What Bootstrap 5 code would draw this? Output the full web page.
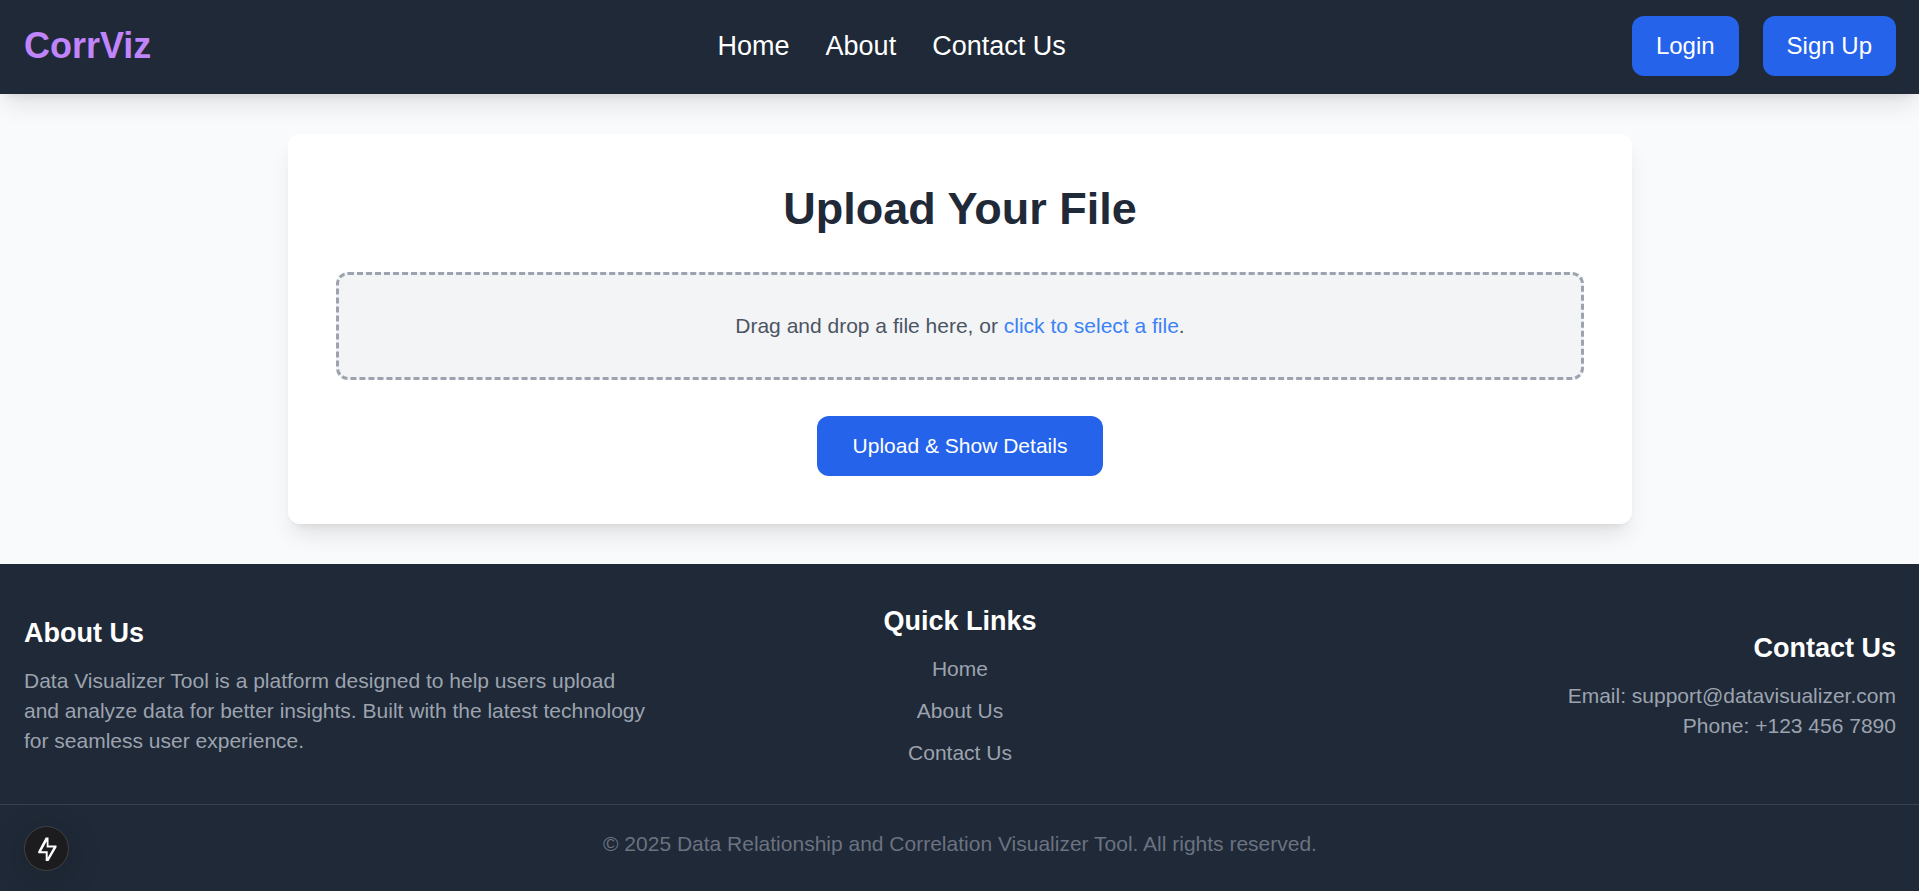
<!DOCTYPE html>
<html lang="en">
<head>
<meta charset="utf-8">
<meta name="viewport" content="width=device-width, initial-scale=1">
<title>CorrViz</title>
<link href="https://cdn.jsdelivr.net/npm/bootstrap@5.3.0/dist/css/bootstrap.min.css" rel="stylesheet">
<style>
  body { font-family: "Liberation Sans", Arial, sans-serif; font-size: 21px; line-height: 30px; background: #f9fafb; }
  a { text-decoration: none; }
  .bg-slate { background: #1f2937; }
  .soft-shadow { box-shadow: 0 15px 23px -5px rgba(0,0,0,.1), 0 6px 9px -6px rgba(0,0,0,.1); }
  .site-header { padding: 16px 23px 18px 24px; }
  .brand { font-size: 36px; line-height: 48px; color: #c084fc; }
  .site-nav { gap: 36px; font-size: 27px; line-height: 42px; }
  .btn-blue { --bs-btn-color: #fff; --bs-btn-bg: #2563eb; --bs-btn-hover-color: #fff; --bs-btn-hover-bg: #1d4ed8; --bs-btn-active-color: #fff; --bs-btn-active-bg: #1d4ed8;
    border: 0; border-radius: 12px; padding: 12px 24px; font-size: 24px; line-height: 36px; }
  .btn-upload { padding: 15px 36px; font-size: 21px; line-height: 30px; }
  .page-main { padding: 40px 23px 40px 24px; }
  .upload-card { max-width: 1344px; padding: 48px; border: 0; border-radius: 12px; }
  .upload-title { font-size: 45px; line-height: 54px; margin-bottom: 36px; color: #1f2937; }
  .drop-zone { border: 3px dashed #9ca3af; border-radius: 12px; background: #f3f4f6; color: #4b5563; padding: 36px; margin-bottom: 36px; }
  .drop-zone label { color: #3b82f6; cursor: pointer; }
  .footer-cols { padding: 36px 23px 36px 24px; }
  .footer-title { font-size: 27px; line-height: 42px; margin-bottom: 12px; color: #fff; }
  .footer-text, .footer-text a { color: #9ca3af; }
  .quick-links { gap: 12px; }
  .copyright { border-top: 1px solid #374151; color: #6b7280; padding: 24px 23px 32px 24px; }
  .dev-button { left: 24px; bottom: 20px; width: 45px; height: 45px; background: #1c1c1e; border: 1px solid #414144; box-shadow: 0 6px 36px rgba(0,0,0,.15); }
</style>
</head>
<body class="d-flex flex-column min-vh-100">
<header class="site-header bg-slate soft-shadow d-flex flex-wrap align-items-center justify-content-between position-relative">
  <a class="brand fw-bold" href="#">CorrViz</a>
  <nav class="site-nav d-flex flex-wrap">
    <a class="text-white" href="#">Home</a>
    <a class="text-white" href="#about">About</a>
    <a class="text-white" href="#contact">Contact Us</a>
  </nav>
  <div class="d-flex gap-4">
    <button type="button" class="btn btn-blue">Login</button>
    <button type="button" class="btn btn-blue">Sign Up</button>
  </div>
</header>

<main class="page-main flex-grow-1">
  <form class="card upload-card soft-shadow mx-auto text-center">
    <h1 class="upload-title fw-bold">Upload Your File</h1>
    <div class="drop-zone">
      Drag and drop a file here, or <label for="file">click to select a file</label>.
      <input type="file" id="file" class="d-none">
    </div>
    <div><button type="button" class="btn btn-blue btn-upload">Upload &amp; Show Details</button></div>
  </form>
</main>

<footer class="bg-slate position-relative">
  <div class="footer-cols">
    <div class="row g-0 align-items-center">
      <section class="col-md-4" id="about">
        <h2 class="footer-title fw-bold">About Us</h2>
        <p class="footer-text mb-0">Data Visualizer Tool is a platform designed to help users upload and analyze data for better insights. Built with the latest technology for seamless user experience.</p>
      </section>
      <section class="col-md-4 text-center">
        <h2 class="footer-title fw-bold">Quick Links</h2>
        <ul class="quick-links footer-text list-unstyled d-flex flex-column mb-0">
          <li><a href="#">Home</a></li>
          <li><a href="#about">About Us</a></li>
          <li><a href="#contact">Contact Us</a></li>
        </ul>
      </section>
      <section class="col-md-4 text-md-end" id="contact">
        <h2 class="footer-title fw-bold">Contact Us</h2>
        <p class="footer-text mb-0">Email: support@datavisualizer.com<br>Phone: +123 456 7890</p>
      </section>
    </div>
  </div>
  <p class="copyright text-center mb-0">© 2025 Data Relationship and Correlation Visualizer Tool. All rights reserved.</p>
</footer>

<button type="button" class="dev-button position-fixed rounded-circle d-flex align-items-center justify-content-center p-0" aria-label="Developer tools">
  <svg width="24" height="26" viewBox="0 0 24 26" fill="#fff" fill-rule="evenodd" aria-hidden="true">
    <path d="M10.700 1.500H13.500V9.500H21.500V11.300L13.500 25H10.700V17.200H3.200V15.500ZM11.700 5.300L6.200 15.200H12.700V21.700L18.500 11.500H11.700Z"/>
  </svg>
</button>
<script src="https://cdn.jsdelivr.net/npm/bootstrap@5.3.0/dist/js/bootstrap.bundle.min.js"></script>
</body>
</html>
